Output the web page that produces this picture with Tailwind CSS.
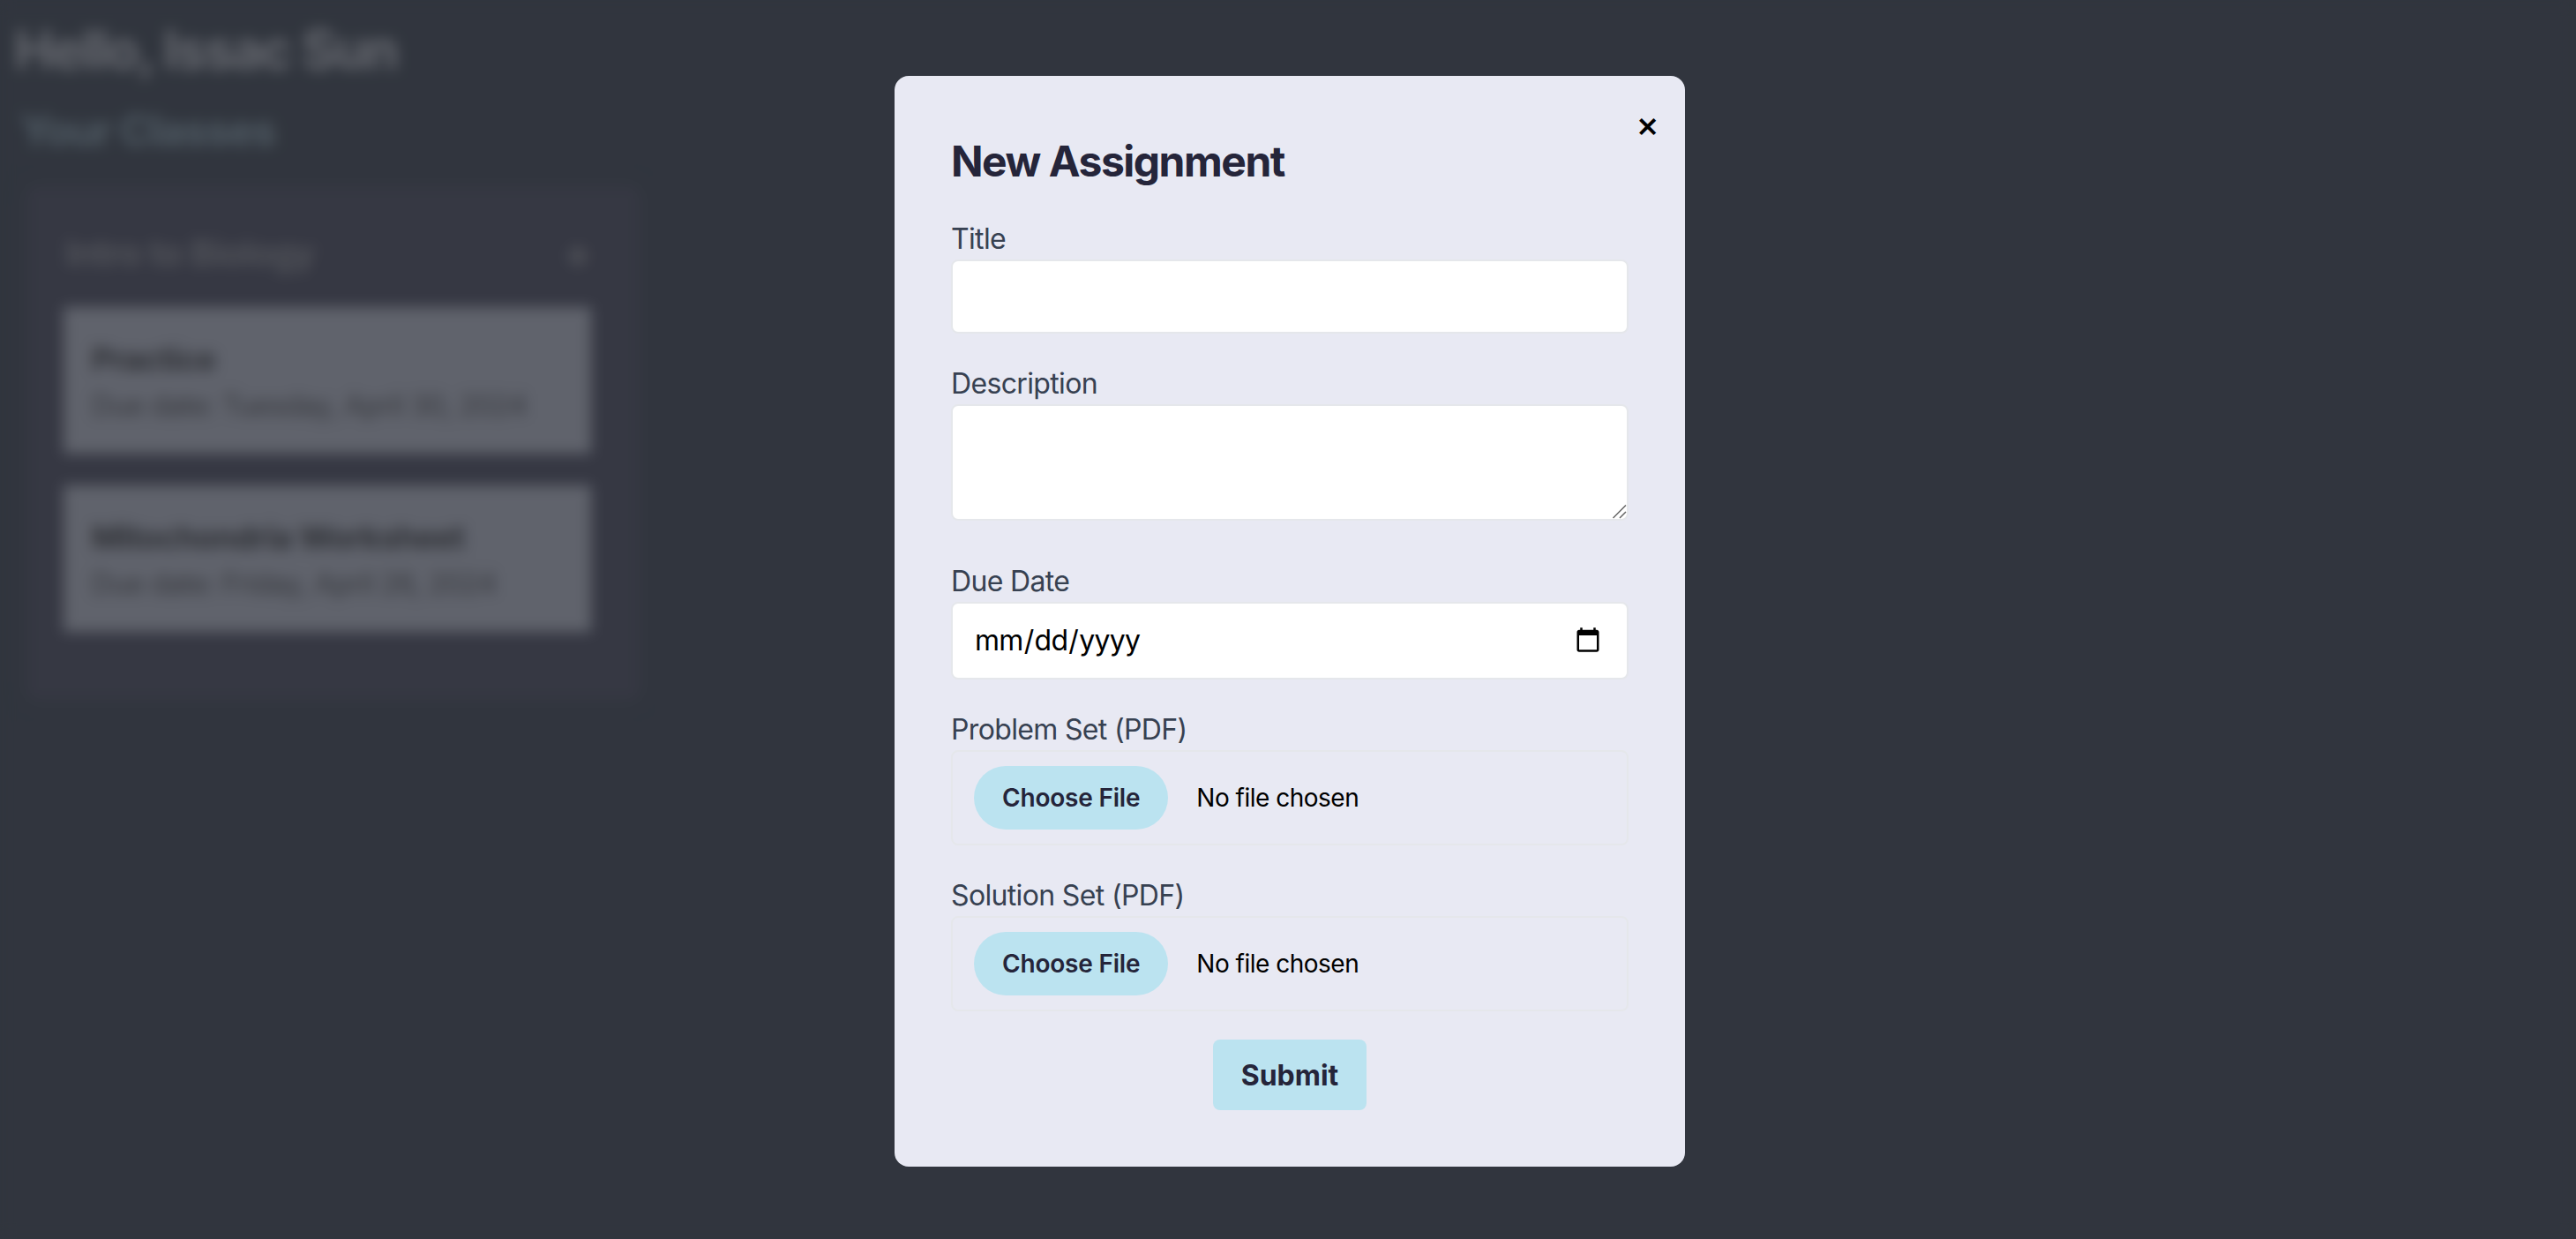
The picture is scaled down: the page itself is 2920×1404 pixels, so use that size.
<!DOCTYPE html>
<html lang="en">
<head>
  <meta charset="UTF-8" />
  <meta name="viewport" content="width=device-width, initial-scale=1" />
  <title>New Assignment</title>
  <script src="https://cdn.jsdelivr.net/npm/@tailwindcss/browser@4"></script>
</head>
<body class="relative w-[2920px] h-[1404px] overflow-hidden bg-[#626b7c] font-['Inter',sans-serif]">

  <!-- dashboard behind the modal -->
  <main class="pl-4 pt-5">
    <h1 class="text-[60px] leading-[72px] font-bold tracking-[-1.9px] text-[#c9cedc]">Hello, Issac Sun</h1>
    <h2 class="mt-[28px] ml-[7px] text-[48px] leading-[56px] font-bold tracking-[-1.4px] text-[#9eb4c6]">Your Classes</h2>
    <section class="mt-9 ml-4 w-[692px] h-[580px] bg-[#6c7086] rounded-lg shadow-[0_0_24px_rgba(108,112,134,0.7)] px-10 pt-[47px]">
      <div class="flex items-center justify-between h-[56px]">
        <h3 class="ml-[2px] text-[40px] font-semibold tracking-[-0.6px] text-[#a8acb8]">Intro to Biology</h3>
        <span class="text-[48px] leading-none font-bold text-[#a8acb8] mr-[13px]">+</span>
      </div>
      <div class="mt-[33px] flex flex-col gap-9">
        <div class="w-[598px] h-[166px] bg-[#c0c6d8] px-8 pt-[37px]">
          <p class="text-[36px] leading-[44px] font-bold tracking-[-0.6px] text-[#5e626c]">Practice</p>
          <p class="mt-[11px] text-[32px] leading-[40px] tracking-[-0.65px] text-[#70747e]">Due date: Tuesday, April 30, 2024</p>
        </div>
        <div class="w-[598px] h-[166px] bg-[#c0c6d8] px-8 pt-[37px]">
          <p class="text-[36px] leading-[44px] font-bold tracking-[-0.6px] text-[#5e626c]">Mitochondria Worksheet</p>
          <p class="mt-[11px] text-[32px] leading-[40px] tracking-[-0.65px] text-[#70747e]">Due date: Friday, April 26, 2024</p>
        </div>
      </div>
    </section>
  </main>

  <div class="absolute inset-0 bg-black/50 backdrop-blur-[8px] flex items-start justify-center pl-1 pt-[86px]">
    <div class="relative w-[896px] h-[1236px] bg-[#e8e9f3] rounded-2xl p-16">
      <button class="absolute top-[31px] right-[29px] text-[40px] leading-[48px] font-medium text-black">×</button>
      <h2 class="pt-[2px] text-[48px] leading-[62px] font-bold tracking-[-1.5px] text-[#25253a]">New Assignment</h2>

      <form class="mt-8">
        <label class="block pt-[2px] text-[32px] leading-[46px] tracking-[-0.65px] text-[#374151]">Title</label>
        <input type="text" class="block w-full h-[84px] bg-white rounded-lg border-2 border-[#e5e7eb] px-6" />

        <label class="block mt-8 pt-[2px] text-[32px] leading-[46px] tracking-[-0.65px] text-[#374151]">Description</label>
        <div class="relative">
          <textarea class="block w-full h-[132px] bg-white rounded-lg border-2 border-[#e5e7eb] px-6 resize-none"></textarea>
          <svg class="absolute right-[2px] bottom-[2px] w-[16px] h-[16px]" viewBox="0 0 16 16" fill="none" stroke="#666" stroke-width="1.5"><path d="M.5 15 15 .5M8 15 15 8"/></svg>
        </div>

        <label class="block mt-[44px] pt-[2px] text-[32px] leading-[46px] tracking-[-0.65px] text-[#374151]">Due Date</label>
        <input type="date" class="block w-full h-[88px] bg-white rounded-lg border-2 border-[#e5e7eb] pl-6 pr-[26px] text-[32px] tracking-[-0.7px] text-black [&::-webkit-calendar-picker-indicator]:w-[32px] [&::-webkit-calendar-picker-indicator]:h-[32px]" />

        <label class="block mt-8 pt-[2px] text-[32px] leading-[46px] tracking-[-0.65px] text-[#374151]">Problem Set (PDF)</label>
        <input type="file" class="block w-full rounded-lg border-2 border-[#e5e7eb] px-6 py-4 text-[28px] tracking-[-0.5px] text-black file:mr-8 file:px-8 file:py-4 file:leading-[40px] file:rounded-full file:border-0 file:bg-[#bbe3f0] file:text-[28px] file:tracking-[-0.2px] file:font-semibold file:text-[#25253a]" />

        <label class="block mt-8 pt-[2px] text-[32px] leading-[46px] tracking-[-0.65px] text-[#374151]">Solution Set (PDF)</label>
        <input type="file" class="block w-full rounded-lg border-2 border-[#e5e7eb] px-6 py-4 text-[28px] tracking-[-0.5px] text-black file:mr-8 file:px-8 file:py-4 file:leading-[40px] file:rounded-full file:border-0 file:bg-[#bbe3f0] file:text-[28px] file:tracking-[-0.2px] file:font-semibold file:text-[#25253a]" />

        <div class="mt-8 flex justify-center">
          <button type="button" class="h-[80px] px-8 pt-[2px] rounded-lg bg-[#bbe3f0] text-[32px] font-bold text-[#25253a]">Submit</button>
        </div>
      </form>
    </div>
  </div>

</body>
</html>
